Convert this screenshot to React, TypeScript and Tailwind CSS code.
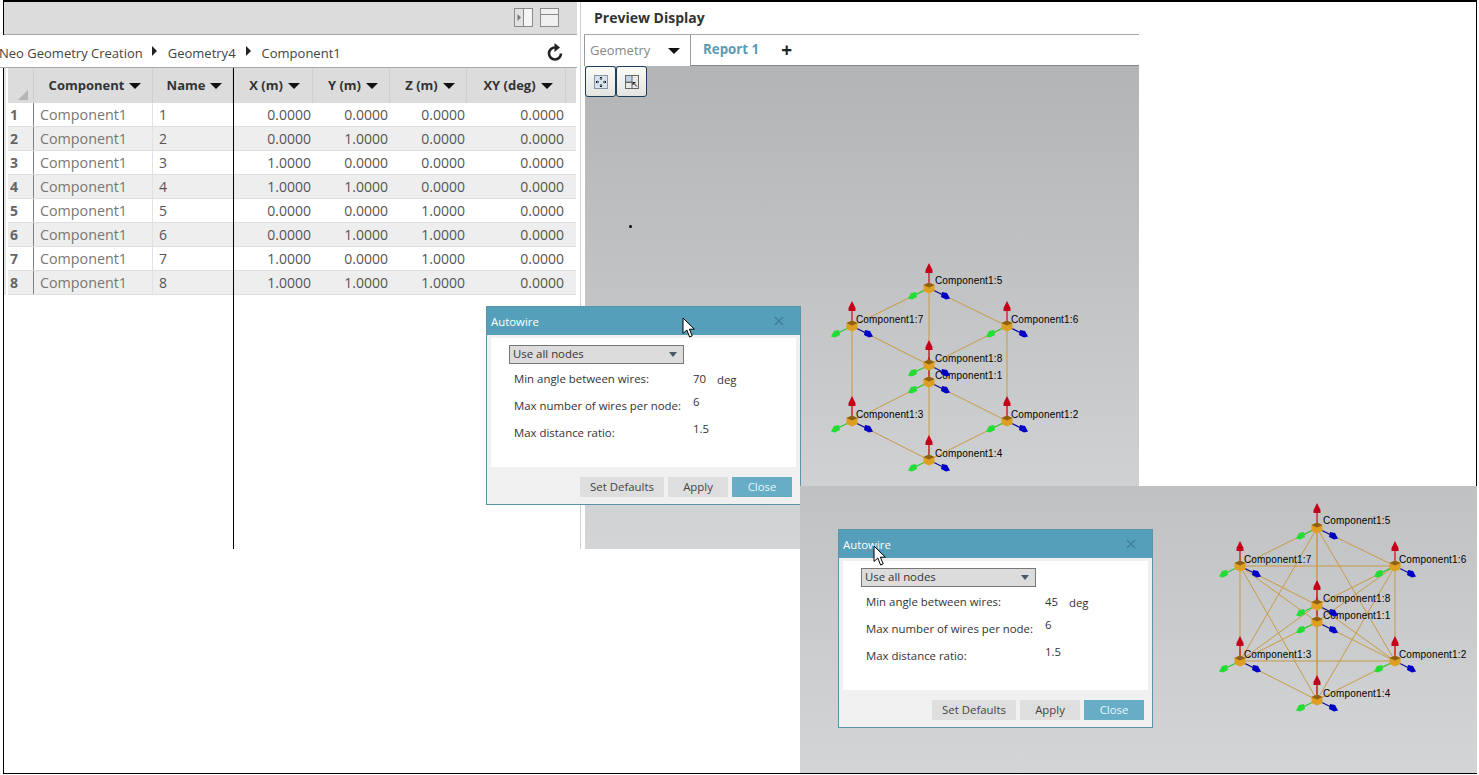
const rows = [
  ['1', '0.0000', '0.0000', '0.0000'],
  ['2', '0.0000', '1.0000', '0.0000'],
  ['3', '1.0000', '0.0000', '0.0000'],
  ['4', '1.0000', '1.0000', '0.0000'],
  ['5', '0.0000', '0.0000', '1.0000'],
  ['6', '0.0000', '1.0000', '1.0000'],
  ['7', '1.0000', '0.0000', '1.0000'],
  ['8', '1.0000', '1.0000', '1.0000'],
];

const gridCols = 'grid grid-cols-[26px_119px_80px_80px_77px_77px_99px_10px]';

const nodes: Record<number, [number, number]> = {
  5: [109, 33],
  7: [32, 71],
  6: [187, 71],
  8: [109, 110],
  1: [109, 127],
  3: [32, 166],
  2: [187, 166],
  4: [109, 205],
};

const cubeEdges = [[1, 2], [1, 3], [2, 4], [3, 4], [5, 6], [5, 7], [6, 8], [7, 8], [1, 5], [2, 6], [3, 7], [4, 8]];
const diagonals = [[1, 4], [2, 3], [5, 8], [6, 7], [1, 6], [2, 5], [3, 8], [4, 7], [1, 7], [3, 5], [2, 8], [4, 6]];

function Caret () {
  return <span className="inline-block h-0 w-0 border-x-[6px] border-t-[6px] border-x-transparent border-t-[#111]" />;
}

function Crumb () {
  return <span className="inline-block h-0 w-0 border-y-[5px] border-l-[5px] border-y-transparent border-l-[#222]" />;
}

function Graph ({ wires, className }: { wires: number[][]; className: string }) {
  return (
    <svg width="270" height="225" className={className}>
      {wires.map(([a, b], i) => (
        <line key={i} x1={nodes[a][0]} y1={nodes[a][1]} x2={nodes[b][0]} y2={nodes[b][1]} stroke="#c99a45" strokeWidth="1" />
      ))}
      {Object.entries(nodes).map(([id, [x, y]]) => (
        <g key={id} transform={`translate(${x} ${y})`}>
          <line x1="0" y1="0" x2="0" y2="-17" stroke="#d0021b" strokeWidth="1.2" />
          <polygon points="0,-25 -3.5,-18 -3.5,-15 3.5,-15 3.5,-18" fill="#c40018" />
          <line x1="0" y1="0" x2="-15" y2="7.5" stroke="#22cc33" strokeWidth="1.2" />
          <polygon points="-21,10.5 -18,5 -13,4 -12,9 -17,11.5" fill="#22dd33" />
          <line x1="0" y1="0" x2="15" y2="7.5" stroke="#0a0aa8" strokeWidth="1.2" />
          <polygon points="21,10.5 18,5 13,4 12,9 17,11.5" fill="#0000c4" />
          <polygon points="0,-5.5 5.5,-3 5.5,3 0,5.5 -5.5,3 -5.5,-3" fill="#dd9f22" />
          <polygon points="0,-5.5 5.5,-3 0,-0.5 -5.5,-3" fill="#8f5f14" />
          <text
            x={id === '7' || id === '3' || id === '6' || id === '2' ? 4 : 6}
            y={id === '5' ? -4 : -3}
            fontSize="10"
            letterSpacing="0.15"
            fill="#000"
            fontFamily="'Liberation Sans', Arial, sans-serif"
          >
            Component1:{id}
          </text>
        </g>
      ))}
    </svg>
  );
}

function Cursor ({ className }: { className: string }) {
  return (
    <svg width="14" height="22" viewBox="0 0 14 22" className={className}>
      <path d="M1 1 L1 16.5 L4.8 13 L7.6 20 L10.2 18.9 L7.4 12.2 L12.4 12.2 Z" fill="#fff" stroke="#000" strokeWidth="1" />
    </svg>
  );
}

function Autowire ({ angle, className }: { angle: string; className: string }) {
  return (
    <div className={`flex h-[199px] w-[315px] flex-col border border-[#5b94a9] bg-[#f0f0f0] text-[11.4px] text-[#333] ${className}`}>
      <div className="flex h-[28px] items-center justify-between bg-[#559fba] pl-[4px] pr-[16px] text-white">
        <span className="mt-[2px]">Autowire</span>
        <svg width="10" height="10" viewBox="0 0 10 10">
          <path d="M1 1 L9 9 M9 1 L1 9" stroke="#3d7e96" strokeWidth="1.3" />
        </svg>
      </div>
      <div className="mx-[4px] mt-[3px] h-[129px] bg-white pl-[18px] pt-[7px]">
        <div className="flex h-[19px] w-[175px] items-center justify-between border border-[#777] bg-[#dcdcdc] pb-[1px] pl-[3px] pr-[6px]">
          <span>Use all nodes</span>
          <span className="h-0 w-0 border-x-[4px] border-t-[5px] border-x-transparent border-t-[#46586a]" />
        </div>
        <div className="mt-[5px] flex h-[20px] items-center pl-[5px]">
          <span className="w-[179px]">Min angle between wires:</span>
          <span className="w-[24px]">{angle}</span>
          <span className="mt-[2px]">deg</span>
        </div>
        <div className="mt-[7px] flex h-[20px] items-center pl-[5px]">
          <span className="w-[179px]">Max number of wires per node:</span>
          <span className="mb-[8px]">6</span>
        </div>
        <div className="mt-[7px] flex h-[20px] items-center pl-[5px]">
          <span className="w-[179px]">Max distance ratio:</span>
          <span className="mb-[9px]">1.5</span>
        </div>
      </div>
      <div className="mt-[10px] flex justify-end gap-[4px] pr-[8px]">
        <button className="h-[20px] w-[84px] bg-[#dedede] text-[#444]">Set Defaults</button>
        <button className="h-[20px] w-[60px] bg-[#dedede] text-[#444]">Apply</button>
        <button className="h-[20px] w-[60px] bg-[#67adc6] text-[#eaf6fa]">Close</button>
      </div>
    </div>
  );
}

function ToolButton ({ children }: { children: React.ReactNode }) {
  return (
    <div className="flex h-[31px] w-[31px] items-center justify-center rounded-[3px] border border-[#1d3f5e] bg-linear-to-b from-[#fbfbf8] to-[#e3e3df]">
      {children}
    </div>
  );
}

export default function App () {
  return (
    <div className="h-[775px] w-[1479px] overflow-hidden bg-white font-['Open_Sans',_sans-serif]">
      <div className="relative ml-[3px] h-[774px] w-[1474px] border border-t-2 border-black">
        {/* Main window */}
        <div className="flex h-[547px] w-[1135px]">
          {/* Left panel */}
          <div className="flex w-[573px] flex-col">
            <div className="flex h-[33px] items-center justify-end gap-[6px] border-b border-[#a8a8a8] bg-[#dcdcdc] pr-[17px]">
              <svg width="20" height="20" viewBox="0 0 20 20">
                <rect x="0.5" y="0.5" width="18" height="18" fill="#e2e2e2" stroke="#8a8a8a" />
                <rect x="9.5" y="0.5" width="9" height="18" fill="#f5f5f5" stroke="#8a8a8a" />
                <path d="M3.5 6 L7 9.5 L3.5 13 Z" fill="#777" />
              </svg>
              <svg width="20" height="20" viewBox="0 0 20 20">
                <rect x="0.5" y="0.5" width="18" height="18" fill="#f0f0f0" stroke="#8a8a8a" />
                <path d="M0.5 6.5 H18.5" stroke="#8a8a8a" />
              </svg>
            </div>
            <div className="relative -ml-[4px] flex h-[33px] w-[577px] items-center border-b border-[#a8a8a8] bg-white pt-[5px] text-[13px] text-[#444]">
              <span className="-ml-[1px] whitespace-nowrap">Neo Geometry Creation</span>
              <span className="mb-[5px] ml-[9px] flex"><Crumb /></span>
              <span className="ml-[11px]">Geometry4</span>
              <span className="mb-[5px] ml-[10px] flex"><Crumb /></span>
              <span className="ml-[11px]">Component1</span>
              <svg width="16" height="18" viewBox="0 0 16 18" className="absolute left-[547px] top-[8px]">
                <path d="M8 4.5 A6 6 0 1 0 14 10.5" fill="none" stroke="#222" strokeWidth="2.6" />
                <path d="M7.5 0 L13 4.5 L7.5 9 Z" fill="#222" />
              </svg>
            </div>
            <div className="w-[572px] border-l-2 border-[#e4e4e4] pl-[2px]">
              <div className={`${gridCols} h-[35px] items-center bg-[#dcdcdc] text-[13px] font-bold text-[#333]`}>
                <div className="flex h-full items-end justify-end border-r border-[#cfcfcf] pb-[3px] pr-[5px]">
                  <span className="h-0 w-0 border-b-[10px] border-l-[10px] border-b-[#b4b4b4] border-l-transparent" />
                </div>
                {['Component', 'Name', 'X (m)', 'Y (m)', 'Z (m)', 'XY (deg)'].map((h) => (
                  <div key={h} className="flex h-full items-center justify-center gap-[5px] border-r border-[#cfcfcf] pl-[4px]">
                    {h}
                    <Caret />
                  </div>
                ))}
                <div />
              </div>
              {rows.map((r, i) => (
                <div key={r[0]} className={`${gridCols} h-[24px] items-center border-b border-[#dedede] text-[14px] text-[#555] ${i % 2 === 0 ? 'bg-white' : 'bg-[#eeeeee]'}`}>
                  <div className="flex h-full items-center border-r border-[#808080] pl-[2px] font-bold text-[#666]">{r[0]}</div>
                  <div className="flex h-full items-center border-r border-[#e2e2e2] pl-[6px] text-[14.3px] text-[#777]">Component1</div>
                  <div className="pl-[6px]">{r[0]}</div>
                  <div className="pr-[2px] text-right">{r[1]}</div>
                  <div className="pr-[2px] text-right">{r[2]}</div>
                  <div className="pr-[2px] text-right">{r[3]}</div>
                  <div className="pr-[2px] text-right">0.0000</div>
                  <div />
                </div>
              ))}
            </div>
          </div>
          <div className="ml-[3px] mr-[3px] w-[1px] bg-[#cfcfcf]" />
          {/* Preview panel */}
          <div className="flex min-w-0 flex-1 flex-col">
            <div className="flex h-[33px] items-center border-b border-[#a8a8a8] pb-[2px] pl-[10px] text-[14px] font-bold text-[#333]">
              Preview Display
            </div>
            <div className="flex h-[31px]">
              <div className="flex w-[107px] items-center justify-between border-x border-[#999] bg-white pl-[5px] pr-[10px] text-[13px] text-[#888]">
                Geometry
                <Caret />
              </div>
              <div className="flex flex-1 items-center border-b border-[#888]">
                <span className="ml-[12px] text-[13.3px] font-bold text-[#5a9cb5]">Report 1</span>
                <span className="ml-[22px] text-[19px] font-bold leading-none text-[#222]">+</span>
              </div>
            </div>
            <div className="ml-[1px] flex-1 bg-linear-to-b from-[#b3b4b5] to-[#d4d5d6]">
              <div className="flex">
                <ToolButton>
                  <svg width="16" height="16" viewBox="0 0 16 16">
                    <rect x="1.5" y="1.5" width="13" height="13" fill="#d6e4f2" stroke="#33415c" strokeDasharray="1 1" />
                    <path d="M8 3 V6 M8 10 V13 M3 8 H6 M10 8 H13 M6.8 4.2 L8 3 L9.2 4.2 M6.8 11.8 L8 13 L9.2 11.8 M4.2 6.8 L3 8 L4.2 9.2 M11.8 6.8 L13 8 L11.8 9.2" stroke="#111" fill="none" />
                  </svg>
                </ToolButton>
                <ToolButton>
                  <svg width="16" height="16" viewBox="0 0 16 16">
                    <rect x="1.5" y="1.5" width="13" height="13" fill="#e8e8e8" stroke="#666" />
                    <rect x="1.5" y="1.5" width="6.5" height="6.5" fill="#c3d3e6" stroke="#666" />
                    <path d="M1.5 8.5 H8 V14.5" stroke="#666" fill="none" />
                    <path d="M9 8.5 L13 12.5 M9 8.5 V11 M9 8.5 H11.5" stroke="#111" fill="none" />
                  </svg>
                </ToolButton>
              </div>
            </div>
          </div>
        </div>

        {/* Stray point in the viewport */}
        <span className="absolute left-[625px] top-[223px] h-[3px] w-[3px] rounded-full bg-black" />
        {/* Splitter line over the table */}
        <span className="absolute left-[229px] top-[66px] h-[481px] w-[1px] bg-black" />

        <Graph wires={cubeEdges} className="absolute left-[816px] top-[253px]" />
        <Autowire angle="70" className="absolute left-[482px] top-[304px]" />
        <Cursor className="absolute left-[678px] top-[315px]" />

        {/* Second capture, overlapping the first */}
        <div className="absolute left-[796px] top-[484px] h-[287px] w-[677px] bg-linear-to-b from-[#c0c1c3] to-[#d4d5d6]">
          <Graph wires={[...cubeEdges, ...diagonals]} className="absolute left-[408px] top-[9px]" />
          <Autowire angle="45" className="absolute left-[38px] top-[43px]" />
          <Cursor className="absolute left-[73px] top-[59px]" />
        </div>
      </div>
    </div>
  );
}
